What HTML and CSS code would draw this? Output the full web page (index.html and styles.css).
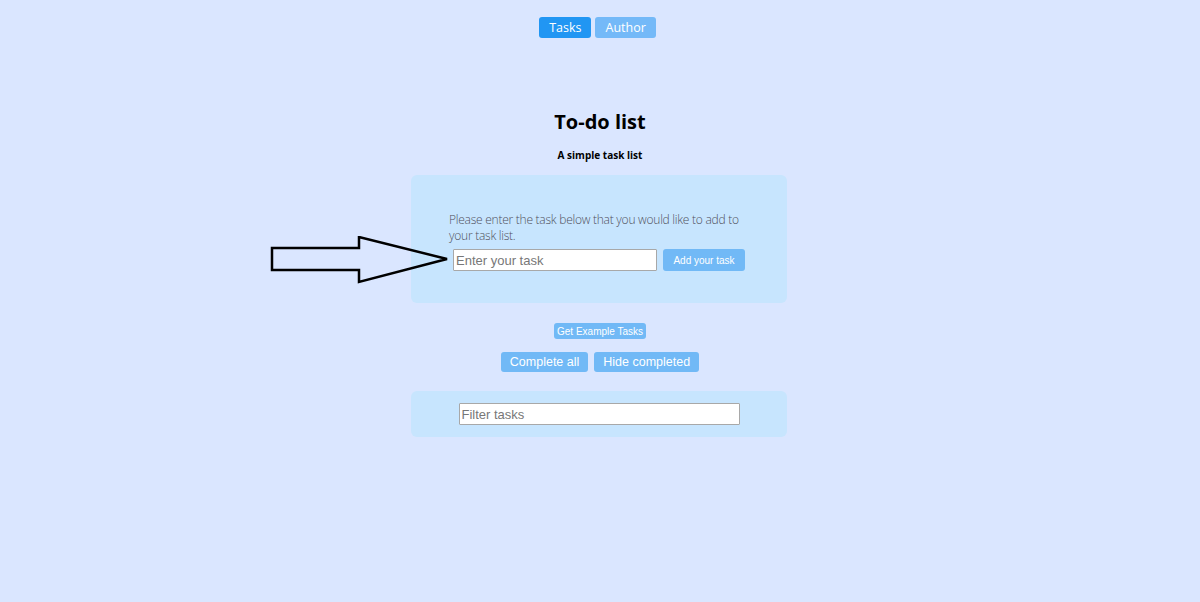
FILE: index.html
```html
<!DOCTYPE html>
<html>
<head>
<meta charset="utf-8">
<link rel="stylesheet" href="styles.css">
</head>
<body>
<nav class="nav">
  <button class="nav-btn active">Tasks</button>
  <button class="nav-btn">Author</button>
</nav>
<header class="header">
  <h1 class="title">To-do list</h1>
  <p class="subtitle">A simple task list</p>
</header>
<section class="card add-card">
  <svg class="arrow" width="180" height="50" viewBox="0 0 180 50">
    <polygon points="2,12 89,12 89,1 177,23 89,46 89,34 2,34" fill="none" stroke="#000" stroke-width="2.5" stroke-linejoin="miter"/>
  </svg>
  <p class="intro">Please enter the task below that you would like to add to your task list.</p>
  <div class="add-row">
    <input class="task-input" type="text" placeholder="Enter your task">
    <button class="btn add-btn">Add your task</button>
  </div>
</section>
<div class="example-row">
  <button class="btn small-btn">Get Example Tasks</button>
</div>
<div class="action-row">
  <button class="btn action-btn">Complete all</button>
  <button class="btn action-btn">Hide completed</button>
</div>
<section class="card filter-card">
  <input class="filter-input" type="text" placeholder="Filter tasks">
</section>
</body>
</html>
```
FILE: styles.css
```css
html, body {
  margin: 0;
  padding: 0;
}
body {
  background: #dae6ff;
  font-family: "Open Sans", sans-serif;
  min-height: 602px;
}
.nav {
  display: flex;
  justify-content: center;
  gap: 4px;
  padding-top: 17px;
  padding-right: 5px;
}
.nav-btn {
  border: none;
  border-radius: 3px;
  background: #74b9f8;
  color: #fff;
  font-family: "Open Sans", sans-serif;
  font-size: 12.5px;
  height: 21px;
  padding: 0 10px;
  line-height: 21px;
}
.nav-btn.active {
  background: #2196f3;
}
.header {
  text-align: center;
  margin-top: 70px;
}
.title {
  margin: 0;
  font-size: 20px;
  font-weight: 700;
  line-height: 28px;
  color: #000;
}
.subtitle {
  margin: 12px 0 0;
  font-size: 10px;
  font-weight: 700;
  line-height: 14px;
  color: #000;
}
.card {
  background: #c7e5fe;
  border-radius: 6px;
  width: 376px;
  margin: 0 auto;
  box-sizing: border-box;
  position: relative;
  left: -1px;
}
.add-card {
  margin-top: 13px;
  height: 128px;
  padding: 37px 38px 0 38px;
}
.arrow {
  position: absolute;
  left: -141px;
  top: 61px;
}
.intro {
  margin: 0;
  width: 300px;
  font-size: 12px;
  letter-spacing: -0.25px;
  font-weight: 300;
  line-height: 16px;
  color: #50505c;
}
.add-row {
  display: flex;
  align-items: center;
  gap: 6px;
  margin-top: 5px;
  padding-left: 4px;
}
.task-input, .filter-input {
  box-sizing: border-box;
  height: 22px;
  border: 1px solid #a8a8a8;
  border-radius: 1px;
  background: #fff;
  font-family: "Liberation Sans", Arial, sans-serif;
  font-size: 13px;
  padding: 0 2px;
  outline: none;
}
.task-input::placeholder, .filter-input::placeholder {
  color: #777;
}
.task-input {
  width: 204px;
}
.btn {
  border: none;
  border-radius: 3px;
  background: #71b9f6;
  color: #fff;
  font-family: "Liberation Sans", Arial, sans-serif;
  cursor: pointer;
}
.add-btn {
  width: 82px;
  height: 22px;
  font-size: 10px;
  padding: 0;
}
.example-row {
  display: flex;
  justify-content: center;
  margin-top: 20px;
}
.small-btn {
  height: 16px;
  font-size: 10px;
  padding: 0 3px;
}
.action-row {
  display: flex;
  justify-content: center;
  gap: 6px;
  margin-top: 13px;
}
.action-btn {
  height: 20px;
  font-size: 12.5px;
  padding: 0 9px;
}
.filter-card {
  margin-top: 19px;
  height: 46px;
  display: flex;
  justify-content: center;
  align-items: center;
}
.filter-input {
  width: 281px;
  height: 22px;
}
```
